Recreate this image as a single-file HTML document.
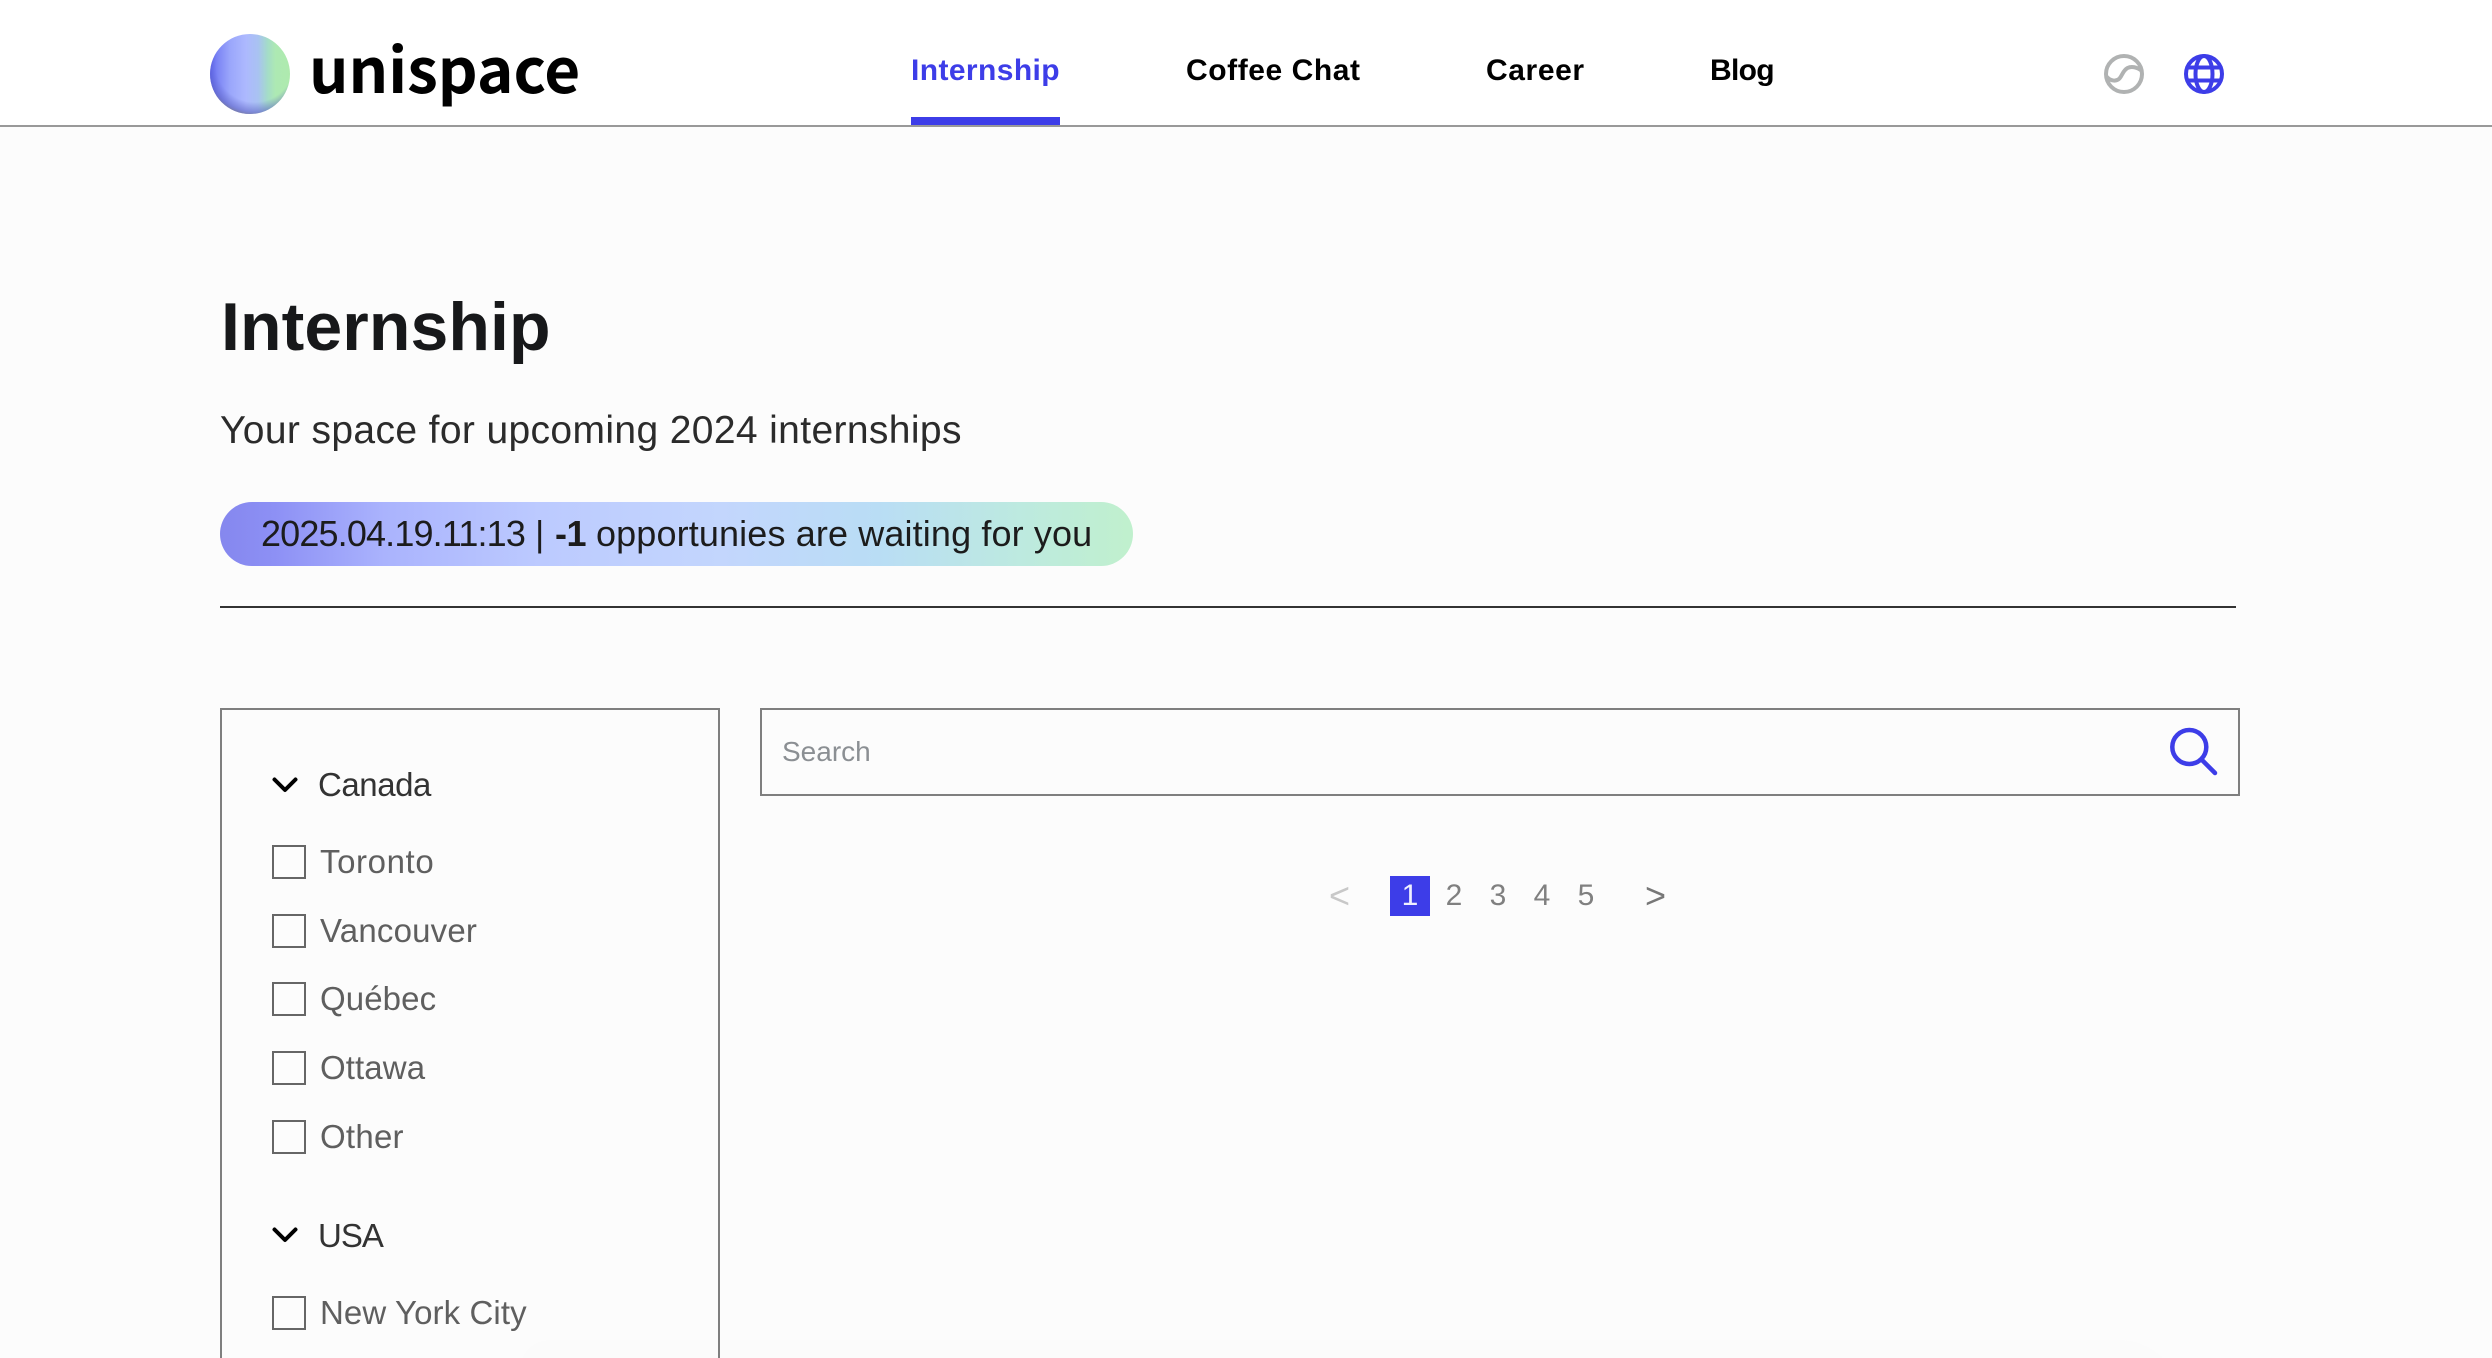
<!DOCTYPE html>
<html lang="en">
<head>
<meta charset="utf-8">
<title>unispace - Internship</title>
<style>
html,body{margin:0;padding:0;width:2492px;height:1358px;overflow:hidden;background:#fcfcfc;font-family:"Liberation Sans",Arial,sans-serif}
#page{position:relative;width:2492px;height:1358px;overflow:hidden;background:#fcfcfc}
.a{position:absolute;white-space:nowrap;line-height:1;margin:0}
header{position:absolute;left:0;top:0;width:2492px;height:125px;background:#fff;border-bottom:2px solid #999}
.nav{font-size:30px;font-weight:700;color:#000;top:56px}
.box{position:absolute;box-sizing:border-box;border:2px solid #7f7f7f}
.cb{position:absolute;left:272px;width:34px;height:34px;box-sizing:border-box;border:2px solid #666}
.it{left:320px;font-size:33px;color:#5f5f5f}
.grp{left:318px;font-size:33px;color:#333}
.pg{font-size:30px;color:#808080;top:881px;width:40px;text-align:center}
.pl{top:516px;font-size:36px;color:#1c1c1c}
svg{position:absolute;overflow:visible}
</style>
</head>
<body>
<div id="page">
<div style="position:absolute;left:520px;top:1340px;width:1660px;height:60px;background:#fbfbfb;border-radius:60px 120px 0 0"></div>
<header>
  <svg style="left:210px;top:34px" width="80" height="80" viewBox="0 0 80 80">
    <defs>
      <linearGradient id="s1" x1="0" y1="0" x2="1" y2="0">
        <stop offset="0" stop-color="#5f66ee"/>
        <stop offset=".1" stop-color="#7d86f5"/>
        <stop offset=".25" stop-color="#9aa6fb"/>
        <stop offset=".45" stop-color="#adb9fe"/>
        <stop offset=".6" stop-color="#a9c2f2"/>
        <stop offset=".72" stop-color="#a4dcc8"/>
        <stop offset=".82" stop-color="#ade9b3"/>
        <stop offset="1" stop-color="#aeeaae"/>
      </linearGradient>
      <radialGradient id="s2" cx=".56" cy=".36" r=".68">
        <stop offset=".72" stop-color="#5a60c8" stop-opacity="0"/>
        <stop offset=".9" stop-color="#5a60c0" stop-opacity=".55"/>
        <stop offset="1" stop-color="#777" stop-opacity=".9"/>
      </radialGradient>
    </defs>
    <circle cx="40" cy="40" r="40" fill="url(#s1)"/>
    <circle cx="40" cy="40" r="40" fill="url(#s2)"/>
  </svg>
  <div class="a" style="left:309px;top:35px;font-family:'Noto Sans CJK JP','Liberation Sans',sans-serif;font-size:62px;font-weight:700;color:#000">unispace</div>
  <nav>
    <a class="a nav" style="left:911px;color:#3d3de8;letter-spacing:.4px">Internship</a>
    <a class="a nav" style="left:1186px;letter-spacing:.57px">Coffee Chat</a>
    <a class="a nav" style="left:1486px;letter-spacing:.6px">Career</a>
    <a class="a nav" style="left:1710px;letter-spacing:-.7px">Blog</a>
  </nav>
  <div style="position:absolute;left:911px;top:117px;width:149px;height:8px;background:#3d3de8"></div>
  <svg style="left:2104px;top:54px" width="40" height="40" viewBox="0 0 40 40" fill="none" stroke="#b0b2b2" stroke-width="4">
    <circle cx="20" cy="20" r="18"/>
    <path d="M2 22C6 27 12 28 15.500 24.500C18.500 21 19 16.500 23.500 14C27.500 12 33 13 38 17"/>
  </svg>
  <svg style="left:2184px;top:54px" width="40" height="40" viewBox="0 0 40 40" fill="none" stroke="#3d3de8" stroke-width="4">
    <circle cx="20" cy="20" r="18"/>
    <ellipse cx="20" cy="20" rx="8.500" ry="18"/>
    <path d="M3.500 13.500H36.500M3.500 26.500H36.500"/>
  </svg>
</header>

<main>
  <h1 class="a" style="left:221px;top:293px;font-size:68px;font-weight:700;color:#17181a;letter-spacing:.1px">Internship</h1>
  <p class="a" style="left:220px;top:411px;font-size:39px;color:#2b2b2b;letter-spacing:.37px">Your space for upcoming 2024 internships</p>
  <div style="position:absolute;left:220px;top:502px;width:913px;height:64px;border-radius:32px;background:linear-gradient(90deg,#8587ee 0%,#8d90f5 6%,#aab3fd 18%,#bccaff 35%,#c3d6fd 55%,#b9ddf5 72%,#bdeadf 88%,#c0f0cd 100%)"></div>
  <div class="a pl" style="left:261px;letter-spacing:-.85px">2025.04.19.11:13</div>
  <div class="a pl" style="left:535px">|</div>
  <b class="a pl" style="left:555px;letter-spacing:-.5px">-1</b>
  <div class="a pl" style="left:596px;letter-spacing:.13px">opportunies are waiting for you</div>
  <div style="position:absolute;left:220px;top:606px;width:2016px;height:2px;background:#333"></div>

  <aside class="box" style="left:220px;top:708px;width:500px;height:700px"></aside>
  <svg style="left:272px;top:777px" width="26" height="16" viewBox="0 0 26 16" fill="none" stroke="#000" stroke-width="4" stroke-linecap="round" stroke-linejoin="round"><path d="M2.500 2.500L13 13L23.500 2.500"/></svg>
  <div class="a grp" style="top:768px;letter-spacing:-.45px">Canada</div>
  <span class="cb" style="top:845px"></span><div class="a it" style="top:845px;letter-spacing:.6px">Toronto</div>
  <span class="cb" style="top:914px"></span><div class="a it" style="top:914px;letter-spacing:.2px">Vancouver</div>
  <span class="cb" style="top:982px"></span><div class="a it" style="top:982px;letter-spacing:.1px">Québec</div>
  <span class="cb" style="top:1051px"></span><div class="a it" style="top:1051px;letter-spacing:.1px">Ottawa</div>
  <span class="cb" style="top:1120px"></span><div class="a it" style="top:1120px;letter-spacing:.25px">Other</div>
  <svg style="left:272px;top:1227px" width="26" height="16" viewBox="0 0 26 16" fill="none" stroke="#000" stroke-width="4" stroke-linecap="round" stroke-linejoin="round"><path d="M2.500 2.500L13 13L23.500 2.500"/></svg>
  <div class="a grp" style="top:1219px;letter-spacing:-1px">USA</div>
  <span class="cb" style="top:1296px"></span><div class="a it" style="top:1296px;letter-spacing:.1px">New York City</div>

  <div class="box" style="left:760px;top:708px;width:1480px;height:88px"></div>
  <div class="a" style="left:782px;top:738px;font-size:28px;color:#8b8f93">Search</div>
  <svg style="left:2170px;top:728px" width="48" height="48" viewBox="0 0 48 48" fill="none" stroke="#3d3de8" stroke-width="4.500" stroke-linecap="round">
    <circle cx="19.300" cy="19" r="17"/>
    <path d="M32 32L45 45"/>
  </svg>

  <div class="a" style="left:1329px;top:878px;font-size:36px;color:#c8c8c8">&lt;</div>
  <div style="position:absolute;left:1390px;top:876px;width:40px;height:40px;background:#3d3de8"></div>
  <div class="a pg" style="left:1390px;color:#f0f0ff">1</div>
  <div class="a pg" style="left:1434px">2</div>
  <div class="a pg" style="left:1478px">3</div>
  <div class="a pg" style="left:1522px">4</div>
  <div class="a pg" style="left:1566px">5</div>
  <div class="a" style="left:1645px;top:878px;font-size:36px;color:#777">&gt;</div>
</main>
</div>
</body>
</html>
